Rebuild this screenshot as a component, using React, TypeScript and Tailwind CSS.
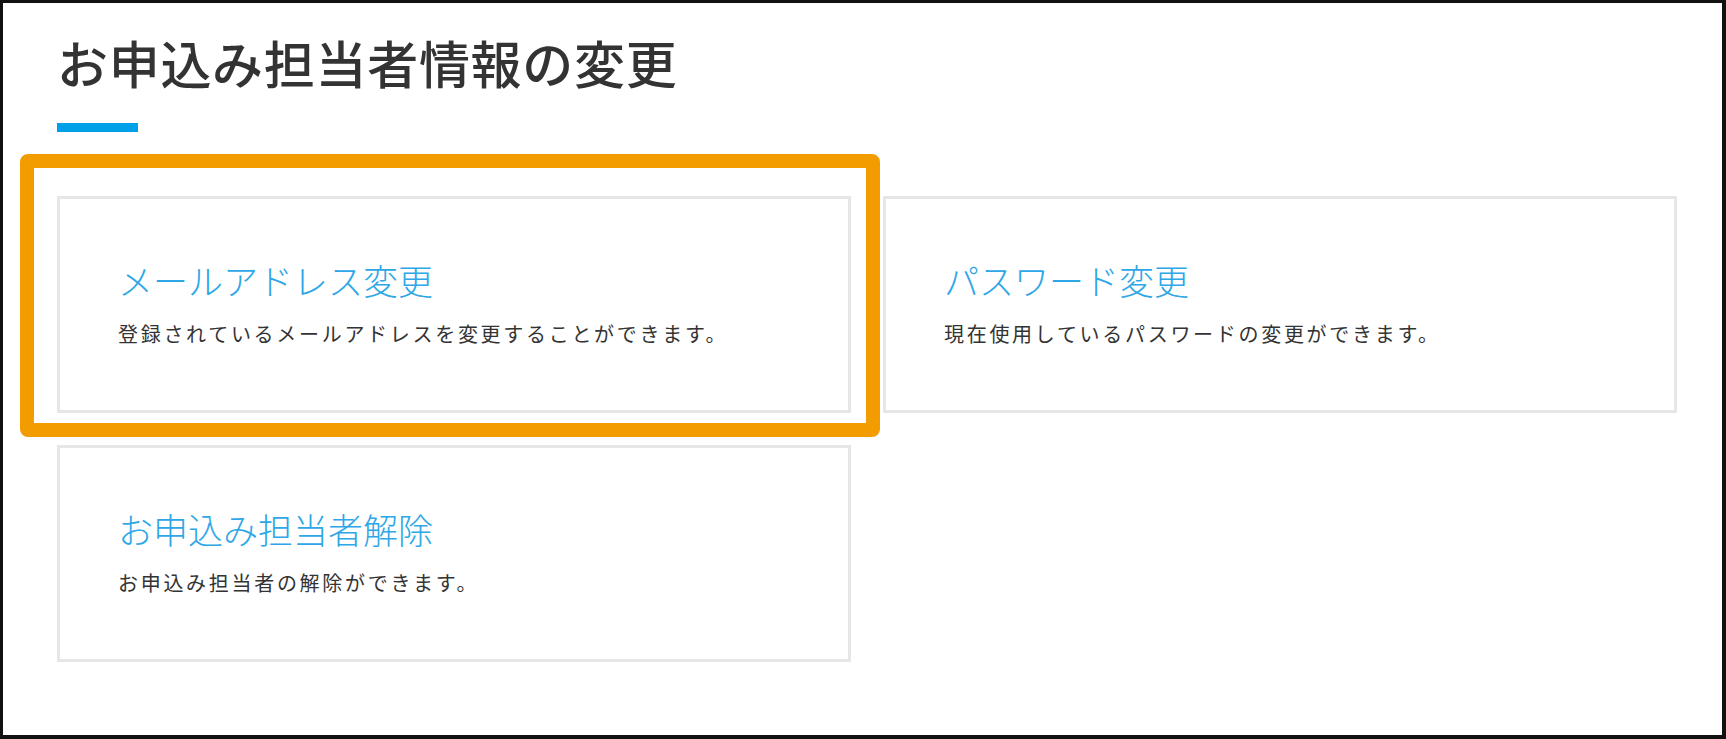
import React from "react";

const cards = [
  { title: "メールアドレス変更", desc: "登録されているメールアドレスを変更することができます。" },
  { title: "パスワード変更", desc: "現在使用しているパスワードの変更ができます。" },
  { title: "お申込み担当者解除", desc: "お申込み担当者の解除ができます。" },
];

export default function App() {
  return (
    <div
      className="relative w-[1726px] h-[739px] bg-white border-l-[3px] border-t-[3px] border-r-4 border-b-4 border-[#111111] pl-[54px] pt-[34px]"
      style={{ fontFamily: '"Noto Sans CJK JP", "Noto Sans", sans-serif' }}
    >
      <h1 className="text-[51px] leading-none font-medium text-[#333333] tracking-[0.7px]">
        お申込み担当者情報の変更
      </h1>
      <div className="mt-[35px] w-[81px] h-[9px] bg-[#00a0e9]" />
      <div className="mt-[64px] grid grid-cols-[794px_794px] gap-[32px]">
        {cards.map((c) => (
          <div
            key={c.title}
            className="h-[217px] border-[3px] border-[#e6e6e6] bg-white flex flex-col justify-center pl-[58px] pb-[4px]"
          >
            <div className="text-[35px] leading-none font-light text-[#2ea7e6]">{c.title}</div>
            <div className="mt-[27px] text-[20px] leading-none text-[#333333] tracking-[2.7px]">
              {c.desc}
            </div>
          </div>
        ))}
      </div>
      <div className="absolute left-[17px] top-[151px] w-[860px] h-[283px] border-[14px] border-[#f29c00] rounded-[8px] pointer-events-none" />
    </div>
  );
}
